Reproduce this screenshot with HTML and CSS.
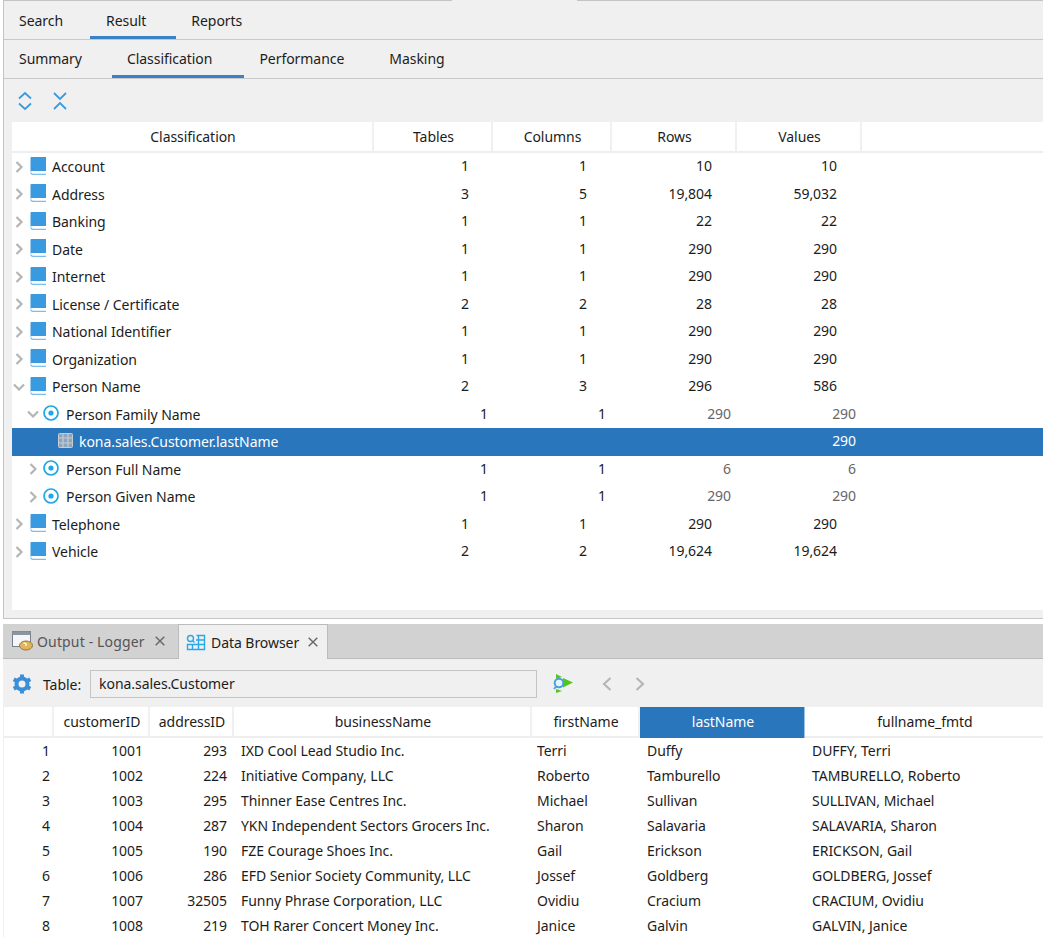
FILE: index.html
```html
<!DOCTYPE html>
<html lang="en">
<head>
  <meta charset="UTF-8">
  <title>Data Browser</title>
  <link rel="stylesheet" href="styles.css">
</head>
<body>
  <svg class="defs" width="0" height="0">
    <symbol id="chevR" viewBox="0 0 9 12"><path d="M1.500 1 6.500 6 1.500 11" fill="none" stroke="currentColor" stroke-width="2.200"/></symbol>
    <symbol id="chevD" viewBox="0 0 12 8"><path d="M1 1.500 6 6.500 11 1.500" fill="none" stroke="currentColor" stroke-width="2.200"/></symbol>
    <symbol id="book" viewBox="0 0 16 18"><path d="M1.500 0H16V14H2.500C1.200 14 .5 14.500 .5 15.500V1C.5 .5 1 0 1.500 0Z" fill="#3a9ae0"/><path d="M1 15.500C1 16.800 1.800 17.300 3 17.300H16" fill="none" stroke="#7dbdec" stroke-width="1.300"/></symbol>
    <symbol id="target" viewBox="0 0 16 16"><circle cx="8" cy="8" r="7" fill="none" stroke="#1fa8e8" stroke-width="1.700"/><circle cx="8" cy="8" r="2.600" fill="#1fa8e8"/></symbol>
    <symbol id="cross" viewBox="0 0 10 10"><path d="M.7 .7 9.300 9.300M9.300 .7 .7 9.300" fill="none" stroke="#666" stroke-width="1.400"/></symbol>
  </svg>

  <div class="main-pane">
    <div class="top-edge"><i></i><i></i></div>
    <div class="tabs">
      <div class="tab">Search</div>
      <div class="tab active">Result</div>
      <div class="tab">Reports</div>
    </div>
    <div class="tabs sub">
      <div class="tab">Summary</div>
      <div class="tab active">Classification</div>
      <div class="tab">Performance</div>
      <div class="tab">Masking</div>
    </div>
    <div class="toolbar">
      <svg width="16" height="20" viewBox="0 0 16 20"><path d="M2 7.500 8 2l6 5.500M2 12.500 8 18l6-5.500" fill="none" stroke="#3a9ae0" stroke-width="1.800"/></svg>
      <svg width="16" height="20" viewBox="0 0 16 20"><path d="M2 2l6 6 6-6M2 18l6-6 6 6" fill="none" stroke="#3a9ae0" stroke-width="1.800"/></svg>
    </div>
    <div class="tree" id="tree"></div>
  </div>

  <div class="bottom-pane">
    <div class="dock-tabs">
      <div class="dock-tab logger">
        <svg width="22" height="22" viewBox="0 0 22 22"><rect x=".5" y="1.500" width="18" height="15" fill="#f6f6f6" stroke="#77808c"/><rect x=".5" y="1.500" width="18" height="3.500" fill="#8b95a2"/><ellipse cx="14" cy="15.500" rx="6.500" ry="4.500" fill="#e0b55e" stroke="#9b7428"/><path d="M11.500 13.500c2-1 4 .5 2 2.500" fill="none" stroke="#fff" stroke-width="1.200"/></svg>
        <span>Output - Logger</span>
        <svg class="close" width="10" height="10"><use href="#cross"/></svg>
      </div>
      <div class="dock-tab active">
        <svg width="20" height="17" viewBox="0 0 20 17"><g fill="none" stroke="#2aa7e6" stroke-width="1.400"><circle cx="4.500" cy="4.500" r="3"/><path d="M7 7l1.500 1.500M10.500 1.500H18.500V15.500H1.500V10.500H18.500M10 6H18.500M6.500 10.500V15.500M12.500 1.500V15.500"/></g></svg>
        <span>Data Browser</span>
        <svg class="close" width="10" height="10"><use href="#cross"/></svg>
      </div>
    </div>
    <div class="table-bar">
      <svg width="22" height="22" viewBox="0 0 22 22"><circle cx="11" cy="11" r="7.500" fill="#3a8fd8"/><path d="M11 1.500v19M2.770 6.250l16.460 9.500M19.230 6.250 2.770 15.750" stroke="#3a8fd8" stroke-width="4"/><circle cx="11" cy="11" r="3.500" fill="#f0f0f0"/></svg>
      <label class="table-label">Table:</label>
      <div class="table-input">kona.sales.Customer</div>
      <svg class="run" width="22" height="20" viewBox="0 0 22 20"><path d="M3 0l6 3-6 2zM10 4l10 4.500-10 5zM3 19l6-2-6-2z" fill="#4fc71c"/><circle cx="6" cy="9" r="4.300" fill="#e8f3fb" stroke="#4ba0e2" stroke-width="2"/><path d="M3 12.500l-2 2.500" stroke="#4ba0e2" stroke-width="2"/></svg>
      <svg class="nav prev" width="12" height="16" viewBox="0 0 12 16"><path d="M9.500 2 3 8l6.500 6" fill="none" stroke="#b3b3b3" stroke-width="2"/></svg>
      <svg class="nav" width="12" height="16" viewBox="0 0 12 16"><path d="M2.500 2 9 8l-6.500 6" fill="none" stroke="#b3b3b3" stroke-width="2"/></svg>
    </div>
    <div class="grid" id="grid"></div>
  </div>

  <script src="app.js"></script>
</body>
</html>
```

FILE: styles.css
```css
html, body {
  margin: 0;
  height: 937px;
  overflow: hidden;
}

body {
  font-family: "Noto Sans", "Open Sans", sans-serif;
  font-size: 14px;
  letter-spacing: -0.05px;
  color: #1c1c1c;
  background: #fff;
}

.defs {
  position: absolute;
}

/* Top pane */
.main-pane {
  height: 619px;
  box-sizing: border-box;
  margin-left: 3px;
  border-left: 1px solid #c4c4c4;
  border-bottom: 1px solid #c4c4c4;
  background: #f0f0f0;
  display: flex;
  flex-direction: column;
}

.top-edge {
  height: 1px;
  flex: none;
  display: flex;
  gap: 125px;
}

.top-edge i {
  background: #c4c4c4;
  width: 448px;
}

.top-edge i:last-child {
  flex: 1;
}

.tabs {
  height: 39px;
  box-sizing: border-box;
  display: flex;
  border-bottom: 1px solid #c8c8c8;
  flex: none;
}

.tab {
  padding: 0 30px 0 15px;
  line-height: 38px;
}

.tabs:not(.sub) .tab {
  line-height: 40px;
}

.tabs:not(.sub) .tab:first-child {
  padding-right: 27px;
}

.tabs:not(.sub) .tab.active {
  padding: 0 30px 0 16px;
}

.tabs.sub .tab.active {
  padding-right: 32px;
}

.tab.active {
  height: 38px;
  box-shadow: inset 0 -3px 0 #3b82c4;
}

.toolbar {
  height: 43px;
  flex: none;
  display: flex;
  align-items: center;
  gap: 19px;
  padding-left: 13px;
  box-sizing: border-box;
}

.tree {
  margin-left: 8px;
  height: 488px;
  background: #fff;
  overflow: hidden;
}

.tree-head, .tree-row {
  display: grid;
}

.tree-head {
  grid-template-columns: 362px 119px 119px 125px 125px;
  height: 31px;
  border-bottom: 2px solid #eeeeee;
  box-sizing: border-box;
}

.tree-head div {
  text-align: center;
  line-height: 29px;
  padding-left: 2px;
  border-right: 2px solid #f0f0f0;
}

.tree-row {
  grid-template-columns: 362px 119px 118px 125px 125px;
  height: 27.5px;
  line-height: 25.5px;
}

.tree-row .num {
  text-align: right;
  padding-right: 24px;
}

.tree-row .name {
  display: flex;
  align-items: center;
  box-sizing: border-box;
}

.tree-row .name > svg {
  flex: none;
  margin-top: -2px;
}

.tree-row.child .num {
  padding-right: 5px;
}

.tree-row.child .num:nth-child(n+4) {
  color: #666;
}

.arrow {
  width: 14px;
  height: 14px;
  flex: none;
  display: flex;
  align-items: center;
  justify-content: center;
  color: #b5b5b5;
  margin-right: 4px;
}

.indent-1 { padding-left: 14px; }
.tree-row .indent-2 { padding-left: 46px; }

.book { margin-right: 6px; }
.target { margin-left: -1px; margin-right: 7px; }
.leaf { margin-right: 6px; }

.tree-row.selected {
  background: #2976bd;
  color: #fff;
}

.tree-row.selected .num:nth-child(n+4) {
  color: #fff;
}

/* Bottom pane */
.bottom-pane {
  margin-top: 5px;
  margin-left: 3px;
  background: #f0f0f0;
}

.dock-tabs {
  height: 35px;
  box-sizing: border-box;
  background: #d2d2d2;
  border-bottom: 1px solid #bcbcbc;
  display: flex;
}

.dock-tab {
  display: flex;
  align-items: center;
  box-sizing: border-box;
  color: #555;
}

.dock-tab.logger {
  width: 175px;
  padding: 0 13px 0 9px;
  gap: 3px;
}

.dock-tab.logger span {
  letter-spacing: 0.15px;
}

.dock-tab.active {
  width: 150px;
  height: 35px;
  padding: 0 9px 0 7px;
  gap: 5px;
  background: #f0f0f0;
  color: #222;
  border: 1px solid #bcbcbc;
  border-bottom: none;
}

.close {
  margin-left: auto;
}

.table-bar {
  height: 48px;
  display: flex;
  align-items: center;
  box-sizing: border-box;
  padding: 2px 0 0 8px;
}

.table-label {
  margin-left: 10px;
}

.table-input {
  margin-left: 9px;
  width: 447px;
  height: 28px;
  line-height: 26px;
  box-sizing: border-box;
  border: 1px solid #c4c4c4;
  padding-left: 8px;
}

.run {
  margin-left: 16px;
}

.nav {
  margin-left: 21px;
}

.nav.prev {
  margin-left: 26px;
}

.grid {
  margin-left: 1px;
  background: #fff;
}

.grid-head, .grid-row {
  display: grid;
  grid-template-columns: 50px 96px 84px 298px 108px 165px 1fr;
}

.grid-head {
  height: 31px;
  box-sizing: border-box;
  border-bottom: 2px solid #eeeeee;
}

.grid-head div {
  text-align: center;
  line-height: 29px;
  padding-left: 2px;
  border-right: 2px solid #f0f0f0;
}

.grid-head div:last-child {
  border-right: none;
}

.grid-head div.hot {
  background: #2976bd;
  color: #fff;
  height: 31px;
  border-right: 1px solid #9cc3e6;
}

.grid-row {
  height: 25px;
  line-height: 25px;
}

.grid-row .r {
  text-align: right;
  padding-right: 7px;
}

.grid-row .r:first-child {
  padding-right: 4px;
}

.grid-row .l {
  padding-left: 7px;
  white-space: nowrap;
}

.grid-row .l:nth-child(5) {
  padding-left: 5px;
}
```

FILE: app.js
```js
const rows = [
  { name: 'Account', v: ['1', '1', '10', '10'] },
  { name: 'Address', v: ['3', '5', '19,804', '59,032'] },
  { name: 'Banking', v: ['1', '1', '22', '22'] },
  { name: 'Date', v: ['1', '1', '290', '290'] },
  { name: 'Internet', v: ['1', '1', '290', '290'] },
  { name: 'License / Certificate', v: ['2', '2', '28', '28'] },
  { name: 'National Identifier', v: ['1', '1', '290', '290'] },
  { name: 'Organization', v: ['1', '1', '290', '290'] },
  { name: 'Person Name', v: ['2', '3', '296', '586'], open: true },
  { name: 'Person Family Name', v: ['1', '1', '290', '290'], child: true, open: true },
  { name: 'kona.sales.Customer.lastName', v: ['', '', '', '290'], leaf: true },
  { name: 'Person Full Name', v: ['1', '1', '6', '6'], child: true },
  { name: 'Person Given Name', v: ['1', '1', '290', '290'], child: true },
  { name: 'Telephone', v: ['1', '1', '290', '290'] },
  { name: 'Vehicle', v: ['2', '2', '19,624', '19,624'] }
];

const customers = [
  ['1', '1001', '293', 'IXD Cool Lead Studio Inc.', 'Terri', 'Duffy', 'DUFFY, Terri'],
  ['2', '1002', '224', 'Initiative Company, LLC', 'Roberto', 'Tamburello', 'TAMBURELLO, Roberto'],
  ['3', '1003', '295', 'Thinner Ease Centres Inc.', 'Michael', 'Sullivan', 'SULLIVAN, Michael'],
  ['4', '1004', '287', 'YKN Independent Sectors Grocers Inc.', 'Sharon', 'Salavaria', 'SALAVARIA, Sharon'],
  ['5', '1005', '190', 'FZE Courage Shoes Inc.', 'Gail', 'Erickson', 'ERICKSON, Gail'],
  ['6', '1006', '286', 'EFD Senior Society Community, LLC', 'Jossef', 'Goldberg', 'GOLDBERG, Jossef'],
  ['7', '1007', '32505', 'Funny Phrase Corporation, LLC', 'Ovidiu', 'Cracium', 'CRACIUM, Ovidiu'],
  ['8', '1008', '219', 'TOH Rarer Concert Money Inc.', 'Janice', 'Galvin', 'GALVIN, Janice']
];

function icon(id, w, h, cls) {
  return `<svg class="${cls}" width="${w}" height="${h}"><use href="#${id}"/></svg>`;
}

function treeRow(r) {
  const arrow = r.open
    ? `<span class="arrow">${icon('chevD', 12, 8, '')}</span>`
    : `<span class="arrow">${icon('chevR', 9, 12, '')}</span>`;
  let name;
  if (r.leaf) {
    const grid = `<svg class="leaf" width="15" height="15" viewBox="0 0 15 15"><rect x=".5" y=".5" width="14" height="14" rx="1" fill="#8ea5bd" stroke="#c5ccd3"/><path d="M.5 5H14.500M.5 10H14.500M5 .5V14.500M10 .5V14.500" stroke="#c5ccd3" stroke-width="1.200"/></svg>`;
    name = `<div class="name indent-2">${grid}${r.name}</div>`;
  } else if (r.child) {
    name = `<div class="name indent-1">${arrow}${icon('target', 16, 16, 'target')}${r.name}</div>`;
  } else {
    name = `<div class="name">${arrow}${icon('book', 16, 18, 'book')}${r.name}</div>`;
  }
  const nums = r.v.map(v => `<div class="num">${v}</div>`).join('');
  const cls = r.leaf ? 'tree-row child selected' : r.child ? 'tree-row child' : 'tree-row';
  return `<div class="${cls}">${name}${nums}</div>`;
}

const heads = ['Classification', 'Tables', 'Columns', 'Rows', 'Values'];
document.getElementById('tree').innerHTML =
  `<div class="tree-head">${heads.map(h => `<div>${h}</div>`).join('')}</div>` +
  rows.map(treeRow).join('');

const cols = ['', 'customerID', 'addressID', 'businessName', 'firstName', 'lastName', 'fullname_fmtd'];
document.getElementById('grid').innerHTML =
  `<div class="grid-head">${cols.map(c => `<div class="${c === 'lastName' ? 'hot' : ''}">${c}</div>`).join('')}</div>` +
  customers.map(c => `<div class="grid-row">${c.map((v, i) => `<div class="${i < 3 ? 'r' : 'l'}">${v}</div>`).join('')}</div>`).join('');
```
